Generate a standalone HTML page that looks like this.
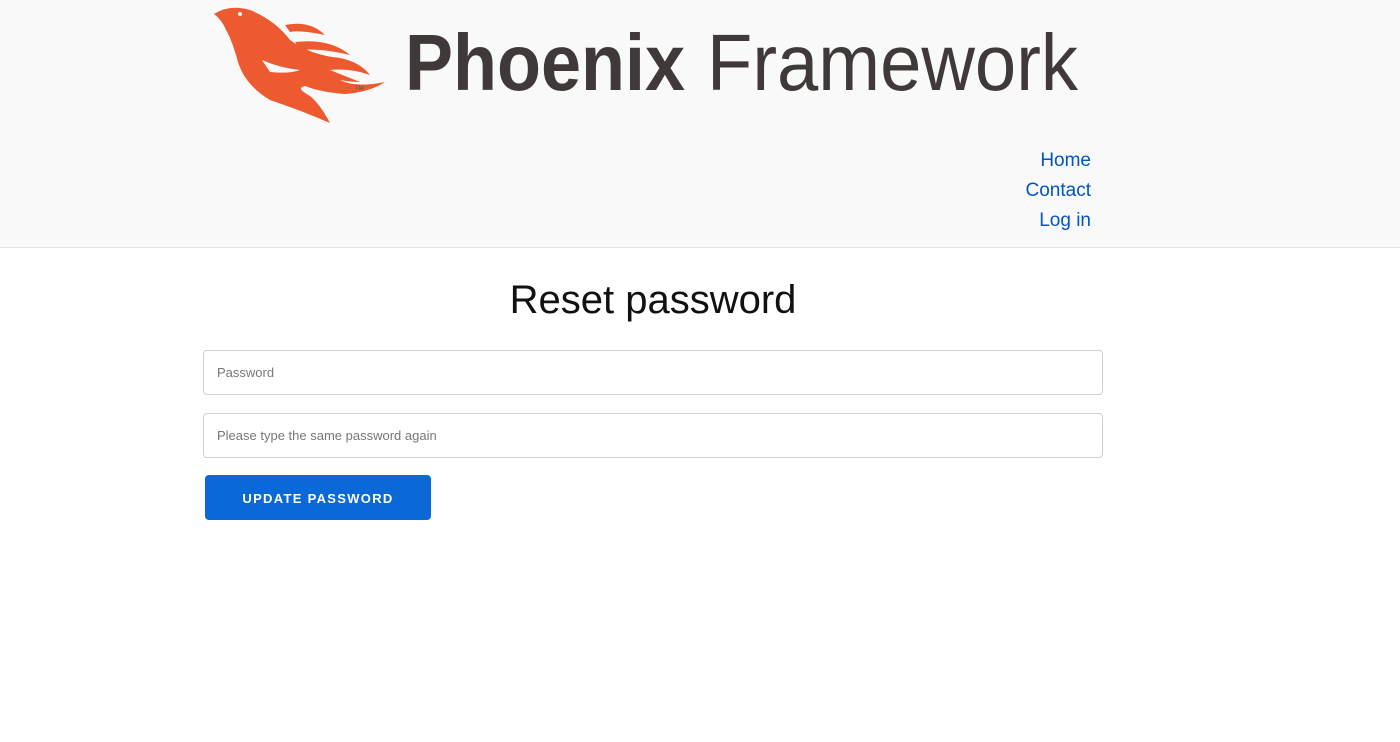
<!DOCTYPE html>
<html><head><style>
body{margin:0;background:#fff;font-family:"Liberation Sans",Helvetica,Arial,sans-serif;}
header{position:absolute;left:0;top:0;width:1400px;height:247px;background:#f9f9f9;border-bottom:1px solid #e2e2e2;}
nav{position:absolute;right:309px;top:146px;text-align:right;font-size:19px;line-height:30px;}
nav a{display:block;color:#0055c8;text-decoration:none;}
h1{position:absolute;left:0;width:1306px;top:278px;margin:0;text-align:center;font-weight:normal;font-size:40px;color:#111;}
.inp{position:absolute;left:203px;width:898px;height:43px;border:1px solid #cfcfd4;border-radius:4px;font-size:13px;color:#777;line-height:43px;box-sizing:content-box;}
.inp span{margin-left:13px;}
.btn{position:absolute;left:205px;top:475px;width:226px;height:45px;background:#0a69d6;border-radius:4px;color:#fff;font-weight:bold;font-size:13px;letter-spacing:1.3px;text-align:center;line-height:47px;}
</style></head><body>
<header>
<svg width="1400" height="140" style="position:absolute;left:0;top:0">
<g fill="#ee5a2f">
<path d="M214 14 Q230 4 250 10 Q275 20 290 40 Q310 55 340 58 Q360 62 370 75 Q350 68 330 70 Q345 76 360 82 Q350 82 340 80 Q355 88 385 82 Q370 92 345 94 Q320 92 305 86 Q295 88 310 96 Q320 104 330 123 Q300 110 270 100 Q245 85 238 62 Q232 40 226 30 Q222 20 214 14Z"/>
<path d="M285 25 Q310 20 325 35 Q300 30 290 32Z"/>
<path d="M295 42 Q330 38 350 55 Q320 48 300 50Z"/>
<path d="M262 60 Q280 68 300 70 Q290 74 270 72Z" fill="#f9f9f9"/>
</g>
<circle cx="240" cy="14" r="2" fill="#f9f9f9"/>
<text x="355" y="90" font-size="6" fill="#555">TM</text>
<text x="405" y="90" font-family="Liberation Sans" font-weight="bold" font-size="80" fill="#3f3a39" textLength="280" lengthAdjust="spacingAndGlyphs">Phoenix</text>
<text x="707" y="90" font-family="Liberation Sans" font-size="80" fill="#3f3a39" textLength="371" lengthAdjust="spacingAndGlyphs">Framework</text>
</svg>
<nav><a>Home</a><a>Contact</a><a>Log in</a></nav>
</header>
<h1>Reset password</h1>
<div class="inp" style="top:350px"><span>Password</span></div>
<div class="inp" style="top:413px"><span>Please type the same password again</span></div>
<div class="btn">UPDATE PASSWORD</div>
</body></html>
